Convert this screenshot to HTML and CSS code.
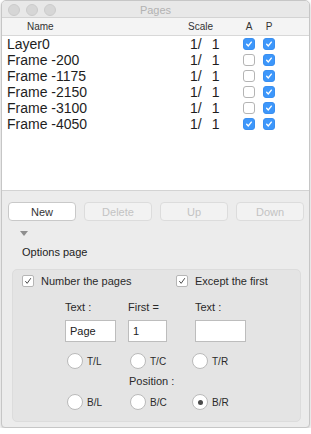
FILE: index.html
```html
<!DOCTYPE html>
<html lang="en">
    <head>
        <title>Pages</title>
        <meta charset="UTF-8">
        <meta name="viewport" content="width=device-width, initial-scale=1.0">
        <link rel="stylesheet" href="styles.css">
    </head>
    <body>
        <div class="window">

            <div class="titlebar">
                <div class="lights">
                    <span class="light"></span>
                    <span class="light"></span>
                    <span class="light"></span>
                </div>
                <span class="title">Pages</span>
            </div>

            <div class="cols list-head">
                <span class="head-name">Name</span>
                <span class="head-scale">Scale</span>
                <span class="head-flag">A</span>
                <span class="head-flag">P</span>
            </div>

            <div class="list">
                <div class="cols row">
                    <span class="name">Layer0</span>
                    <span class="scale"><span>1/</span><span>1</span></span>
                    <span class="cell"><span class="check on"><svg viewBox="0 0 12 12"><polyline points="3.2,6.3 5.2,8.3 8.8,3.8"/></svg></span></span>
                    <span class="cell"><span class="check on"><svg viewBox="0 0 12 12"><polyline points="3.2,6.3 5.2,8.3 8.8,3.8"/></svg></span></span>
                </div>
                <div class="cols row">
                    <span class="name">Frame -200</span>
                    <span class="scale"><span>1/</span><span>1</span></span>
                    <span class="cell"><span class="check"></span></span>
                    <span class="cell"><span class="check on"><svg viewBox="0 0 12 12"><polyline points="3.2,6.3 5.2,8.3 8.8,3.8"/></svg></span></span>
                </div>
                <div class="cols row">
                    <span class="name">Frame -1175</span>
                    <span class="scale"><span>1/</span><span>1</span></span>
                    <span class="cell"><span class="check"></span></span>
                    <span class="cell"><span class="check on"><svg viewBox="0 0 12 12"><polyline points="3.2,6.3 5.2,8.3 8.8,3.8"/></svg></span></span>
                </div>
                <div class="cols row">
                    <span class="name">Frame -2150</span>
                    <span class="scale"><span>1/</span><span>1</span></span>
                    <span class="cell"><span class="check"></span></span>
                    <span class="cell"><span class="check on"><svg viewBox="0 0 12 12"><polyline points="3.2,6.3 5.2,8.3 8.8,3.8"/></svg></span></span>
                </div>
                <div class="cols row">
                    <span class="name">Frame -3100</span>
                    <span class="scale"><span>1/</span><span>1</span></span>
                    <span class="cell"><span class="check"></span></span>
                    <span class="cell"><span class="check on"><svg viewBox="0 0 12 12"><polyline points="3.2,6.3 5.2,8.3 8.8,3.8"/></svg></span></span>
                </div>
                <div class="cols row">
                    <span class="name">Frame -4050</span>
                    <span class="scale"><span>1/</span><span>1</span></span>
                    <span class="cell"><span class="check on"><svg viewBox="0 0 12 12"><polyline points="3.2,6.3 5.2,8.3 8.8,3.8"/></svg></span></span>
                    <span class="cell"><span class="check on"><svg viewBox="0 0 12 12"><polyline points="3.2,6.3 5.2,8.3 8.8,3.8"/></svg></span></span>
                </div>
            </div>

            <div class="panel">
                <div class="buttons">
                    <button class="btn">New</button>
                    <button class="btn" disabled>Delete</button>
                    <button class="btn" disabled>Up</button>
                    <button class="btn" disabled>Down</button>
                </div>

                <div class="disclosure"></div>
                <div class="group-title">Options page</div>

                <div class="group">
                    <div class="opt-row">
                        <label class="opt"><span class="box"><svg viewBox="0 0 12 12"><polyline points="2.8,6.2 5,8.8 9.4,2.6"/></svg></span>Number the pages</label>
                        <label class="opt"><span class="box"><svg viewBox="0 0 12 12"><polyline points="2.8,6.2 5,8.8 9.4,2.6"/></svg></span>Except the first</label>
                    </div>

                    <div class="fields">
                        <span class="field-label">Text :</span>
                        <span class="field-label">First =</span>
                        <span class="field-label">Text :</span>
                        <span class="field wide">Page</span>
                        <span class="field narrow">1</span>
                        <span class="field wide"></span>
                    </div>

                    <div class="radios">
                        <label class="radio"><span class="dot"></span>T/L</label>
                        <label class="radio"><span class="dot"></span>T/C</label>
                        <label class="radio"><span class="dot"></span>T/R</label>
                        <span class="position">Position :</span>
                        <label class="radio"><span class="dot"></span>B/L</label>
                        <label class="radio"><span class="dot"></span>B/C</label>
                        <label class="radio"><span class="dot on"></span>B/R</label>
                    </div>
                </div>
            </div>

        </div>
    </body>
</html>
```

FILE: styles.css
```css
body{
    margin: 0;
    background: #fff;
    font-family: "Liberation Sans", Arial, Helvetica, sans-serif;
    color: #222;
}
.window{
    box-sizing: border-box;
    width: 309px;
    height: 428px;
    margin-left: 1px;
    border: 1px solid #c6c6c6;
    border-radius: 5px 5px 4px 4px;
    background: #ececec;
    box-shadow: 0 2px 4px rgba(0, 0, 0, .22);
    overflow: hidden;
}
.titlebar{
    display: grid;
    grid-template-columns: 1fr auto 1fr;
    height: 13px;
    padding-top: 3px;
    background: #e8e8e8;
    border-bottom: 1px solid #d3d3d3;
}
.lights{
    display: flex;
    gap: 6px;
    padding-left: 6px;
}
.light{
    box-sizing: border-box;
    width: 12px;
    height: 12px;
    border-radius: 50%;
    background: #d6d6d6;
    border: 1px solid #cbcbcb;
}
.title{
    font-size: 11px;
    line-height: 13px;
    color: #b2b2b2;
}
.cols{
    display: grid;
    grid-template-columns: 183px 54px 20px 20px;
}
.list-head{
    height: 17px;
    background: #f4f4f4;
    border-bottom: 1px solid #d8d8d8;
    font-size: 10px;
    line-height: 17px;
    color: #333;
}
.head-name{
    padding-left: 25px;
}
.head-scale{
    padding-left: 3px;
}
.head-flag{
    text-align: center;
}
.list{
    height: 154px;
    background: #fff;
    border-bottom: 1px solid #d3d3d3;
}
.row{
    height: 16px;
    font-size: 14px;
    line-height: 16px;
    color: #1e1e1e;
}
.name{
    padding-left: 5px;
}
.scale{
    display: flex;
    gap: 10px;
    padding-left: 5px;
}
.cell{
    display: flex;
    align-items: center;
    justify-content: center;
}
.check{
    box-sizing: border-box;
    width: 12px;
    height: 12px;
    border-radius: 3px;
    background: #fff;
    border: 1px solid #b4b4b4;
}
.check.on{
    background: #3d97fb;
    border-color: #3a8ff0;
}
.check svg{
    display: block;
    width: 10px;
    height: 10px;
}
.check polyline{
    fill: none;
    stroke: #fff;
    stroke-width: 1.7;
    stroke-linecap: round;
    stroke-linejoin: round;
}
.panel{
    padding: 11px 4px 0 6px;
}
.buttons{
    display: flex;
    gap: 8px;
}
.btn{
    box-sizing: border-box;
    width: 68px;
    height: 19px;
    padding: 0;
    border: 1px solid #c9c9c9;
    border-radius: 4px;
    background: #fff;
    font: 11px "Liberation Sans", Arial, sans-serif;
    color: #333;
}
.btn:disabled{
    background: #f2f2f2;
    border-color: #dcdcdc;
    color: #c3c3c3;
}
.disclosure{
    width: 0;
    height: 0;
    margin: 10px 0 0 12px;
    border-left: 4px solid transparent;
    border-right: 4px solid transparent;
    border-top: 5px solid #8e8e8e;
}
.group-title{
    margin: 10px 0 0 14px;
    font-size: 11px;
    line-height: 13px;
    color: #222;
}
.group{
    box-sizing: border-box;
    width: 289px;
    margin: 10px 0 0 4px;
    padding: 5px 0 11px;
    background: #e4e4e4;
    border: 1px solid #dcdcdc;
    border-radius: 5px;
    font-size: 11px;
    color: #2a2a2a;
}
.opt-row{
    display: grid;
    grid-template-columns: 154px auto;
    padding-left: 9px;
}
.opt{
    display: flex;
    align-items: center;
    gap: 7px;
    height: 12px;
    line-height: 13px;
}
.box{
    box-sizing: border-box;
    width: 12px;
    height: 12px;
    border-radius: 2px;
    background: #fff;
    border: 1px solid #b6b6b6;
}
.box svg{
    display: block;
    width: 10px;
    height: 10px;
}
.box polyline{
    fill: none;
    stroke: #4d4d4d;
    stroke-width: 1.2;
}
.fields{
    display: grid;
    grid-template-columns: 63px 67px 60px;
    row-gap: 6px;
    margin-top: 14px;
    padding-left: 52px;
}
.field-label{
    line-height: 13px;
}
.field{
    box-sizing: border-box;
    height: 22px;
    padding-left: 4px;
    background: #fff;
    border: 1px solid #bdbdbd;
    line-height: 20px;
    color: #222;
}
.field.wide{
    width: 51px;
}
.field.narrow{
    width: 39px;
}
.radios{
    display: grid;
    grid-template-columns: 63px 62px auto;
    row-gap: 6px;
    margin-top: 11px;
    padding-left: 54px;
}
.radio{
    display: flex;
    align-items: center;
    gap: 4px;
    height: 16px;
    font-size: 10px;
}
.dot{
    box-sizing: border-box;
    display: flex;
    align-items: center;
    justify-content: center;
    width: 16px;
    height: 16px;
    border-radius: 50%;
    background: #fff;
    border: 1px solid #bababa;
}
.dot.on::after{
    content: "";
    width: 5px;
    height: 5px;
    border-radius: 50%;
    background: #4a4a4a;
}
.position{
    grid-column: 2 / 4;
    margin-left: -1px;
    line-height: 13px;
}
```
